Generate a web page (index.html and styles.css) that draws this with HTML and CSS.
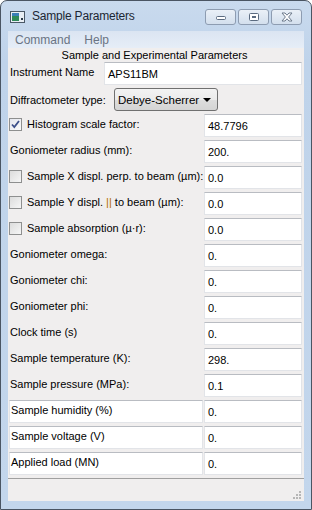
FILE: index.html
```html
<!DOCTYPE html>
<html lang="en">
<head>
  <meta charset="UTF-8" />
  <title>Sample Parameters</title>
  <link rel="stylesheet" href="styles.css">
</head>
<body>
  <div class="window">
    <div class="titlebar">
      <svg class="appicon" width="15" height="12" viewBox="0 0 15 12">
        <rect x="0.5" y="0.5" width="14" height="11" fill="#e8eef4" stroke="#4a5866"/>
        <rect x="2" y="2" width="7" height="8" fill="#2f8a5a"/>
        <rect x="2" y="2" width="7" height="3" fill="#3a7fb8"/>
        <rect x="11" y="7" width="2" height="2" fill="#2b3b4a"/>
      </svg>
      <span class="title">Sample Parameters</span>
      <div class="winbtns">
        <div class="winbtn">
          <svg width="12" height="8" viewBox="0 0 12 8"><rect x="1.5" y="3.5" width="9" height="3" rx="1" fill="#fff" stroke="#5b6b80"/></svg>
        </div>
        <div class="winbtn">
          <svg width="12" height="10" viewBox="0 0 12 10"><rect x="1.5" y="1.5" width="9" height="7" rx="1" fill="#fff" stroke="#5b6b80"/><rect x="4" y="4" width="4" height="2" fill="#5b6b80"/></svg>
        </div>
        <div class="winbtn">
          <svg width="14" height="10" viewBox="0 0 14 10"><path d="M2 1 L5 1 L7 3.2 L9 1 L12 1 L8.6 5 L12 9 L9 9 L7 6.8 L5 9 L2 9 L5.4 5 Z" fill="#fff" stroke="#6d7a8c"/></svg>
        </div>
      </div>
    </div>

    <div class="menubar">
      <span class="menu">Command</span>
      <span class="menu">Help</span>
    </div>

    <div class="client">
      <div class="header">Sample and Experimental Parameters</div>

      <div class="rows">
        <div class="row">
          <span class="label name">Instrument Name</span>
          <div class="field wide">APS11BM</div>
        </div>
        <div class="row">
          <span class="label diff">Diffractometer type:</span>
          <div class="select">
            <span>Debye-Scherrer</span>
            <svg width="8" height="4" viewBox="0 0 8 4"><path d="M0 0 L8 0 L4 4 Z" fill="#000"/></svg>
          </div>
        </div>
        <div class="row">
          <span class="check on">
            <svg width="11" height="11" viewBox="0 0 11 11"><path d="M2 5.5 L4.3 8 L9 2" fill="none" stroke="#3c4f8a" stroke-width="1.8"/></svg>
          </span>
          <span class="label">Histogram scale factor:</span>
          <div class="field">48.7796</div>
        </div>
        <div class="row">
          <span class="label">Goniometer radius (mm):</span>
          <div class="field">200.</div>
        </div>
        <div class="row">
          <span class="check"></span>
          <span class="label">Sample X displ. perp. to beam (µm):</span>
          <div class="field">0.0</div>
        </div>
        <div class="row">
          <span class="check"></span>
          <span class="label">Sample Y displ. <span class="par">||</span> to beam (µm):</span>
          <div class="field">0.0</div>
        </div>
        <div class="row">
          <span class="check"></span>
          <span class="label">Sample absorption (µ·r):</span>
          <div class="field">0.0</div>
        </div>
        <div class="row">
          <span class="label">Goniometer omega:</span>
          <div class="field">0.</div>
        </div>
        <div class="row">
          <span class="label">Goniometer chi:</span>
          <div class="field">0.</div>
        </div>
        <div class="row">
          <span class="label">Goniometer phi:</span>
          <div class="field">0.</div>
        </div>
        <div class="row">
          <span class="label">Clock time (s)</span>
          <div class="field">0.</div>
        </div>
        <div class="row">
          <span class="label">Sample temperature (K):</span>
          <div class="field">298.</div>
        </div>
        <div class="row">
          <span class="label">Sample pressure (MPa):</span>
          <div class="field">0.1</div>
        </div>
        <div class="row">
          <div class="labelbox">Sample humidity (%)</div>
          <div class="field">0.</div>
        </div>
        <div class="row">
          <div class="labelbox">Sample voltage (V)</div>
          <div class="field">0.</div>
        </div>
        <div class="row">
          <div class="labelbox">Applied load (MN)</div>
          <div class="field">0.</div>
        </div>
      </div>

      <div class="statusbar">
        <svg class="grip" width="10" height="10" viewBox="0 0 10 10">
          <rect x="7" y="1" width="2" height="2" fill="#b6b6b6"/>
          <rect x="4" y="4" width="2" height="2" fill="#b6b6b6"/>
          <rect x="7" y="4" width="2" height="2" fill="#b6b6b6"/>
          <rect x="1" y="7" width="2" height="2" fill="#b6b6b6"/>
          <rect x="4" y="7" width="2" height="2" fill="#b6b6b6"/>
          <rect x="7" y="7" width="2" height="2" fill="#b6b6b6"/>
        </svg>
      </div>
    </div>
  </div>
</body>
</html>
```

FILE: styles.css
```css
body {
  margin: 0;
  background: #ffffff;
  font-family: "Liberation Sans", Arial, sans-serif;
  font-size: 11px;
  color: #000;
}
.window {
  width: 312px;
  height: 510px;
  box-sizing: border-box;
  border: 1px solid #4a5563;
  border-radius: 7px 7px 0 0;
  background: linear-gradient(#c9daee, #bfd3ea 60px, #c3d6ec);
  padding: 0 7px 8px 7px;
  display: flex;
  flex-direction: column;
}
.titlebar {
  height: 30px;
  display: flex;
  align-items: center;
  padding-left: 2px;
}
.appicon {
  margin-right: 7px;
  margin-top: 1px;
}
.title {
  font-size: 12px;
  color: #1c2633;
  letter-spacing: -0.2px;
}
.winbtns {
  margin-left: auto;
  display: flex;
  gap: 2px;
  margin-right: 2px;
  margin-top: 2px;
}
.winbtn {
  width: 29px;
  height: 14px;
  border: 1px solid #8d9cb1;
  border-radius: 3px;
  background: linear-gradient(#eaf0f7, #d3dfed);
  display: flex;
  align-items: center;
  justify-content: center;
}
.menubar {
  height: 17px;
  background: linear-gradient(#dbe5f2, #e6edf7);
  display: flex;
  align-items: center;
  padding-left: 7px;
  gap: 14px;
}
.menu {
  font-size: 12px;
  color: #6a7483;
}
.client {
  flex: 1;
  background: #f0eeee;
  display: flex;
  flex-direction: column;
}
.header {
  height: 14px;
  line-height: 14px;
  text-align: center;
  padding-right: 3px;
}
.rows {
  display: flex;
  flex-direction: column;
  gap: 3px;
  padding-bottom: 3px;
}
.row {
  height: 23px;
  display: flex;
  align-items: center;
  padding-right: 2px;
}
.label {
  flex: 1;
  padding-left: 2px;
  padding-bottom: 4px;
  white-space: nowrap;
}
.label.name {
  flex: none;
  width: 94px;
}
.label.diff {
  flex: none;
  width: 104px;
  padding-bottom: 0;
}
.check + .label {
  padding-left: 5px;
}
.par {
  color: #b46a00;
}
.field {
  width: 98px;
  height: 23px;
  box-sizing: border-box;
  background: #fff;
  border: 1px solid #e2e4e8;
  border-top-color: #b9bcc2;
  padding: 5px 0 0 3px;
}
.field.wide {
  width: 198px;
}
.labelbox {
  flex: 1;
  height: 23px;
  box-sizing: border-box;
  background: #fff;
  border: 1px solid #e2e4e8;
  border-top-color: #b9bcc2;
  margin: 0 1px 0 1px;
  padding: 3px 0 0 1px;
}
.select {
  width: 104px;
  height: 23px;
  box-sizing: border-box;
  border: 1px solid #707070;
  border-radius: 3px;
  background: linear-gradient(#f3f3f3, #ebebeb 50%, #dddddd 51%, #d4d4d4);
  display: flex;
  align-items: center;
  justify-content: space-between;
  padding: 0 6px 0 3px;
  font-size: 11.5px;
}
.check {
  width: 13px;
  height: 13px;
  box-sizing: border-box;
  border: 1px solid #8e8f8f;
  background: linear-gradient(135deg, #dcdcdc, #f6f6f6);
  margin-left: 1px;
  margin-bottom: 2px;
  display: flex;
  align-items: center;
  justify-content: center;
}
.check.on {
  background: linear-gradient(135deg, #e4e6ee, #fafafa);
}
.statusbar {
  flex: 1;
  border-top: 1px solid #a0a0a0;
  display: flex;
  justify-content: flex-end;
  align-items: flex-end;
  padding: 0 2px 1px 0;
}
```
